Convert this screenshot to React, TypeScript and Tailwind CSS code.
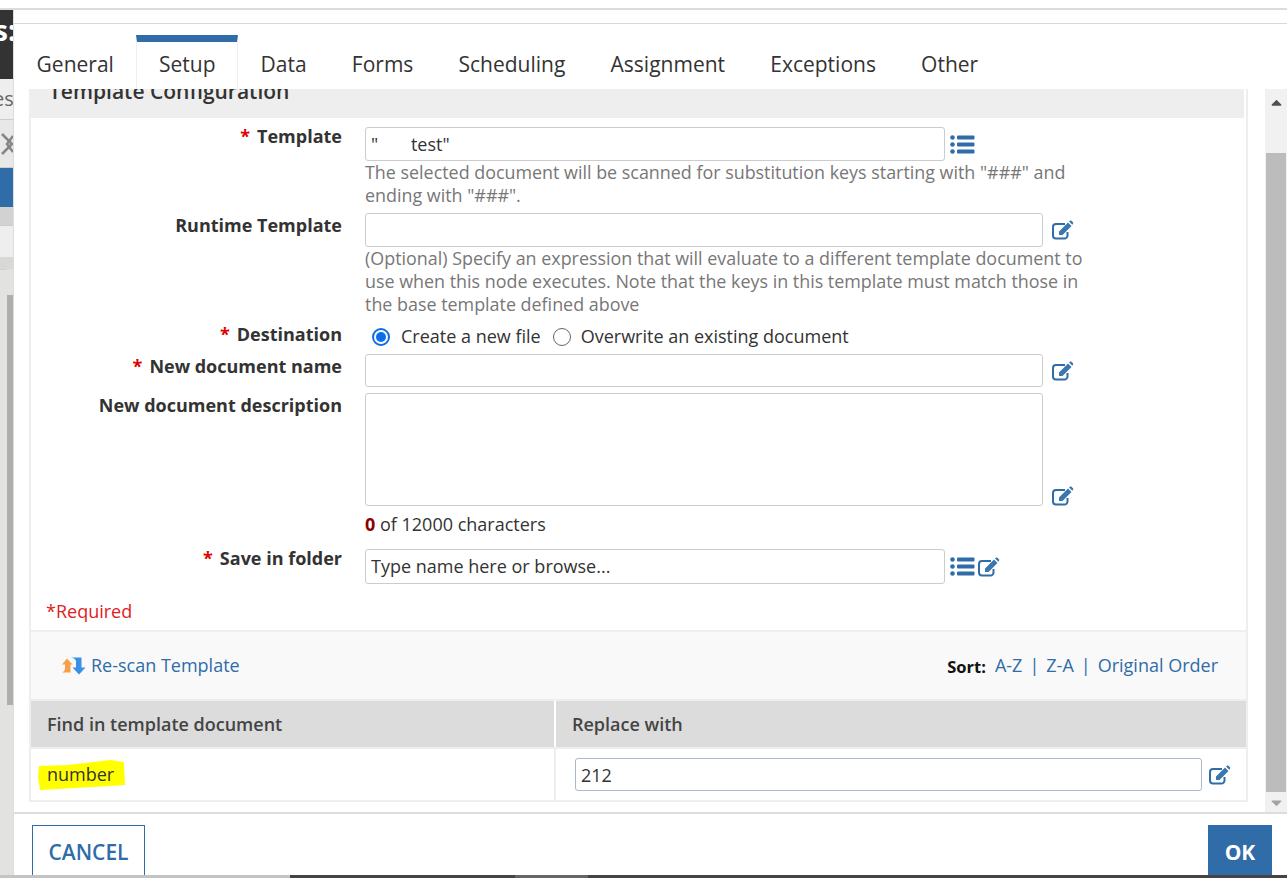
import React from 'react'
import { FaCaretUp, FaCaretDown } from 'react-icons/fa'

const tabs = ['General', 'Setup', 'Data', 'Forms', 'Scheduling', 'Assignment', 'Exceptions', 'Other']

const ListIcon = () => (
  <svg width="25" height="19" viewBox="0 0 25 19" className="shrink-0" fill="#2f6ca8">
    <circle cx="2.5" cy="2.5" r="2.3" />
    <circle cx="2.5" cy="9.5" r="2.3" />
    <circle cx="2.5" cy="16.5" r="2.3" />
    <rect x="7" y="0.5" width="17.5" height="4" rx="1" />
    <rect x="7" y="7.5" width="17.5" height="4" rx="1" />
    <rect x="7" y="14.5" width="17.5" height="4" rx="1" />
  </svg>
)

const EditIcon = () => (
  <svg width="22" height="20" viewBox="0 0 22 20" className="shrink-0">
    <path d="M15.5 12 V15.5 A3 3 0 0 1 12.5 18.5 H4 A3 3 0 0 1 1 15.5 V7 A3 3 0 0 1 4 4 H13" fill="none" stroke="#2f6ca8" strokeWidth="2" />
    <path d="M7 11.5 L16 2.5 L19.5 6 L10.5 15 H7 Z M17 1.5 L18 0.7 A1 1 0 0 1 19.4 0.7 L21 2.3 A1 1 0 0 1 21 3.7 L20.3 4.8 Z" fill="#3a77ae" />
  </svg>
)

const RescanIcon = () => (
  <svg width="24" height="18" viewBox="0 0 24 18" className="shrink-0">
    <path d="M5 1.5 L10.5 7.5 H8.5 V15.5 H0 C2 14.5 3 13 3 11 V7.5 H0 Z" fill="#f5a04a" />
    <path d="M9 0.5 H19.5 V10.5 H23.5 L17 17.5 L10.5 10.5 H14 V4 C14 2.5 12 1 9 0.5 Z" fill="#3a8fe8" />
  </svg>
)

const Label = ({ text, required, className = '' }: { text: string; required?: boolean; className?: string }) => (
  <div className={`w-[311px] shrink-0 text-right font-bold text-[#333] text-[18px] leading-[23px] ${className}`}>
    {required && <span className="text-[#e00000] mr-[7px]">*</span>}
    {text}
  </div>
)

const Hint = ({ children }: { children: React.ReactNode }) => (
  <div className="w-[730px] text-[#777] text-[17.9px] leading-[23px]">{children}</div>
)

const App = () => {
  return (
    <div className="w-[1287px] h-[878px] overflow-hidden relative flex flex-col bg-white font-['Open_Sans',sans-serif]">
      <div className="h-[10px] shrink-0 bg-white border-b-2 border-[#dcdcdc]" />

      <div className="flex-1 flex min-h-0">
        {/* page behind the dialog */}
        <div className="w-[13px] shrink-0 flex flex-col bg-[#e2e2e0] overflow-hidden">
          <div className="h-[69px] bg-[#333] text-white font-bold text-[28px] pt-[5px] leading-[30px] whitespace-nowrap -indent-[6px]">s:</div>
          <div className="h-[41px] bg-[#eee] border-b border-[#ccc] text-[#666] text-[20px] leading-[40px] whitespace-nowrap -indent-[7px]">es</div>
          <div className="h-[48px] bg-[#e8e8e8] border-b border-[#ccc] flex items-center">
            <svg width="13" height="24" viewBox="0 0 13 24" fill="none" stroke="#858585" strokeWidth="2.5">
              <path d="M2 2 L12 12 L2 22" />
              <path d="M13 4 L7 12 L13 20" />
            </svg>
          </div>
          <div className="h-[39px] bg-[#2f6ca8]" />
          <div className="h-[18px] bg-[#d2d2d2]" />
          <div className="h-[32px] bg-[#eee] border-t border-[#ccc]" />
          <div className="h-[12px] bg-[#d8d8d6]" />
          <div className="flex-1 flex">
            <div className="w-[7px] border-t border-[#d0d0ce]" />
            <div className="w-[6px] h-[410px] mt-[26px] bg-[#aeaeac]" />
          </div>
        </div>

        {/* dialog */}
        <div className="flex-1 flex flex-col min-w-0 border-l border-[#ddd]">
          <div className="h-[14px] shrink-0 border-b border-[#d8d8d8]" />

          <div className="h-[65px] shrink-0 flex">
            {tabs.map((tab) => (
              <div
                key={tab}
                className={
                  tab === 'Setup'
                    ? 'h-[54px] mt-[11px] w-[101.5px] border-t-[7px] border-[#2f6ca8] border-x border-x-[#eee] text-[#333] text-[21px] leading-[44px] text-center'
                    : 'h-[54px] mt-[11px] px-[22.6px] text-[#333] text-[21px] leading-[58px]'
                }
              >
                {tab}
              </div>
            ))}
          </div>

          <div className="flex-1 flex min-h-0">
            <div className="flex-1 min-w-0 overflow-hidden pl-[15px] pr-[17px]">
              <div className="border-x-2 border-b-2 border-[#eee]">
                <div className="h-[29px] bg-[#eee] mr-[2px] overflow-hidden pl-[18px]">
                  <div className="-mt-[13px] text-[#333] text-[21px] font-semibold leading-[30px]">Template Configuration</div>
                </div>

                <div className="flex flex-col pt-[9px]">
                  <div className="flex gap-[23px]">
                    <Label text="Template" required className="-mt-[2px]" />
                    <div className="flex-1">
                      <div className="flex items-center gap-[5px]">
                        <input readOnly value={'"       test"'} className="w-[580px] h-[34px] border border-[#ccc] rounded-[3px] px-[5px] text-[18px] text-[#333] whitespace-pre" />
                        <ListIcon />
                      </div>
                      <Hint>The selected document will be scanned for substitution keys starting with "###" and ending with "###".</Hint>
                    </div>
                  </div>

                  <div className="flex gap-[23px] mt-[6px]">
                    <Label text="Runtime Template" className="mt-[1px]" />
                    <div className="flex-1">
                      <div className="flex items-center gap-[9px]">
                        <input readOnly className="w-[678px] h-[34px] border border-[#ccc] rounded-[3px]" />
                        <EditIcon />
                      </div>
                      <Hint>(Optional) Specify an expression that will evaluate to a different template document to use when this node executes. Note that the keys in this template must match those in the base template defined above</Hint>
                    </div>
                  </div>

                  <div className="flex gap-[23px] mt-[9px]">
                    <Label text="Destination" required className="-mt-[2px]" />
                    <div className="flex items-center text-[#333] text-[18px] leading-[23px]">
                      <span className="w-[18px] h-[18px] ml-[7px] mr-[11px] rounded-full border-2 border-[#0a6fe8] flex items-center justify-center">
                        <span className="w-[10px] h-[10px] rounded-full bg-[#0a6fe8]" />
                      </span>
                      Create a new file
                      <span className="w-[18px] h-[18px] ml-[12px] mr-[10px] rounded-full border border-[#666]" />
                      Overwrite an existing document
                    </div>
                  </div>

                  <div className="flex gap-[23px] mt-[6px]">
                    <Label text="New document name" required className="mt-[1px]" />
                    <div className="flex items-center gap-[9px]">
                      <input readOnly className="w-[678px] h-[33px] border border-[#ccc] rounded-[3px]" />
                      <EditIcon />
                    </div>
                  </div>

                  <div className="flex gap-[23px] mt-[6px]">
                    <Label text="New document description" className="mt-[1px]" />
                    <div>
                      <div className="flex items-end gap-[9px]">
                        <textarea readOnly className="w-[678px] h-[113px] border border-[#ccc] rounded-[3px] resize-none block" />
                        <EditIcon />
                      </div>
                      <div className="text-[#333] text-[18px] leading-[23px] mt-[7px]">
                        <span className="font-bold text-[#8b0000]">0</span> of 12000 characters
                      </div>
                    </div>
                  </div>

                  <div className="flex gap-[23px] mt-[13px]">
                    <Label text="Save in folder" required className="-mt-[2px]" />
                    <div className="flex items-center gap-[5px]">
                      <input readOnly value="Type name here or browse..." className="w-[580px] h-[35px] border border-[#ccc] rounded-[3px] px-[5px] pb-[2px] text-[18px] text-[#333]" />
                      <ListIcon />
                      <div className="-ml-[2px]">
                        <EditIcon />
                      </div>
                    </div>
                  </div>
                </div>

                <div className="text-[#e02020] text-[18px] leading-[23px] pl-[15px] mt-[16px] mb-[7px]">*Required</div>

                <div className="h-[69px] bg-[#f9f9f9] border-t-2 border-[#eee] flex items-center justify-between pl-[31px] pr-[28px]">
                  <div className="flex items-center gap-[5px] text-[#2f6ca8] text-[18px]">
                    <RescanIcon />
                    Re-scan Template
                  </div>
                  <div className="flex items-center text-[#2f6ca8] text-[18px]">
                    <span className="font-bold text-[#111] text-[16.5px] mr-[9px] mt-[4px]">Sort:</span>
                    A-Z<span className="mx-[7px]">|</span>Z-A<span className="mx-[7px]">|</span>Original Order
                  </div>
                </div>

                <div className="flex h-[48px] bg-[#dcdcdc] border-t-2 border-[#eee] font-semibold text-[#444] text-[18px] leading-[46px]">
                  <div className="w-[525px] pl-[16px] border-r-2 border-white">Find in template document</div>
                  <div className="pl-[16px]">Replace with</div>
                </div>

                <div className="flex h-[53px] border-t-2 border-[#eee] text-[#333] text-[18px]">
                  <div className="w-[525px] pl-[16px] border-r-2 border-[#eee] flex items-center">
                    <span className="relative">
                      <svg width="88" height="32" viewBox="0 0 88 32" className="absolute -left-[9px] -top-[2px]">
                        <path d="M1 7 L30 6 L72 1 L86 3 L87 26 L55 28 L2 31 L0 18 Z" fill="#ffff00" />
                      </svg>
                      <span className="relative">number</span>
                    </span>
                  </div>
                  <div className="flex-1 flex items-center pl-[19px] gap-[7px]">
                    <input readOnly value="212" className="w-[627px] h-[33px] border border-[#aab8c8] rounded-[3px] px-[5px] text-[#333]" />
                    <EditIcon />
                  </div>
                </div>
              </div>
            </div>

            {/* scrollbar */}
            <div className="w-[22px] shrink-0 bg-[#f1f1f1] flex flex-col items-center">
              <div className="h-[64px] w-full flex items-start justify-center pt-[5px]">
                <FaCaretUp className="text-[#505050] w-[17px] h-[17px]" />
              </div>
              <div className="flex-1 w-[20px] bg-[#bcbcbc]" />
              <div className="h-[20px] flex items-center justify-center">
                <FaCaretDown className="text-[#a3a3a3] w-[17px] h-[17px]" />
              </div>
            </div>
          </div>

          <div className="h-[63px] shrink-0 border-t-2 border-[#ddd] flex justify-between items-start pt-[11px] pl-[18px] pr-[15px]">
            <button className="w-[113px] h-[52px] pt-[3px] border border-[#2f6ca8] text-[#2f6ca8] font-semibold text-[21px]">CANCEL</button>
            <button className="w-[64px] h-[52px] pt-[3px] bg-[#2f6ca8] text-white font-bold text-[21px]">OK</button>
          </div>
        </div>
      </div>

      {/* taskbar edge */}
      <div className="h-[3px] shrink-0 flex">
        <div className="w-[290px] bg-[#c4c4c4]" />
        <div className="w-[225px] bg-[#444]" />
        <div className="w-[73px] bg-[#666]" />
        <div className="flex-1 bg-[#444]" />
      </div>
    </div>
  )
}

export default App
